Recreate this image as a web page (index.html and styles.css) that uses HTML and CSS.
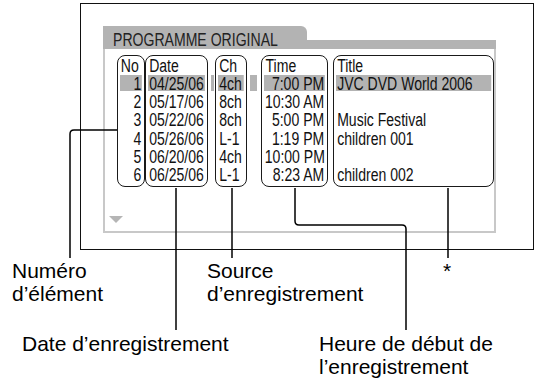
FILE: index.html
```html
<!DOCTYPE html>
<html lang="fr">
<head>
    <meta charset="UTF-8">
    <meta name="viewport" content="width=device-width, initial-scale=1.0">
    <title>Programme original</title>
    <link rel="stylesheet" href="styles.css">
</head>
<body>
    <div class="figure">
        <div class="frame">
            <div class="screen">
                <div class="screen-head">
                    <div class="tab"><span class="tab-text">PROGRAMME ORIGINAL</span></div>
                </div>
                <div class="screen-body">
                    <div class="columns">
                        <div class="col col-no">
                            <div class="cell head">No</div>
                            <div class="cell sel">1</div>
                            <div class="cell">2</div>
                            <div class="cell">3</div>
                            <div class="cell">4</div>
                            <div class="cell">5</div>
                            <div class="cell">6</div>
                        </div>
                        <div class="col col-date">
                            <div class="cell head">Date</div>
                            <div class="cell sel">04/25/06</div>
                            <div class="cell">05/17/06</div>
                            <div class="cell">05/22/06</div>
                            <div class="cell">05/26/06</div>
                            <div class="cell">06/20/06</div>
                            <div class="cell">06/25/06</div>
                        </div>
                        <div class="spacer spacer-a"><div class="strip"></div></div>
                        <div class="col col-ch">
                            <div class="cell head">Ch</div>
                            <div class="cell sel">4ch</div>
                            <div class="cell">8ch</div>
                            <div class="cell">8ch</div>
                            <div class="cell">L-1</div>
                            <div class="cell">4ch</div>
                            <div class="cell">L-1</div>
                        </div>
                        <div class="spacer spacer-b"><div class="strip"></div></div>
                        <div class="col col-time">
                            <div class="cell head">Time</div>
                            <div class="cell sel">7:00 PM</div>
                            <div class="cell">10:30 AM</div>
                            <div class="cell">5:00 PM</div>
                            <div class="cell">1:19 PM</div>
                            <div class="cell">10:00 PM</div>
                            <div class="cell">8:23 AM</div>
                        </div>
                        <div class="spacer spacer-c"></div>
                        <div class="col col-title">
                            <div class="cell head">Title</div>
                            <div class="cell sel">JVC DVD World 2006</div>
                            <div class="cell">&nbsp;</div>
                            <div class="cell">Music Festival</div>
                            <div class="cell">children 001</div>
                            <div class="cell">&nbsp;</div>
                            <div class="cell">children 002</div>
                        </div>
                    </div>
                    <div class="scroll-arrow"></div>
                </div>
            </div>
        </div>

        <!-- callout lines -->
        <svg class="leaders" width="535" height="379" viewBox="0 0 535 379">
            <g fill="none" stroke="#000" stroke-width="1.5">
                <path d="M117 130 H74 Q70 130 70 134 V258"/>
                <path d="M176 188 V330"/>
                <path d="M232 188 V258"/>
                <path d="M295 188 V221 Q295 225 299 225 H402 Q406 225 406 229 V330"/>
                <path d="M448 188 V258"/>
            </g>
        </svg>

        <div class="label label-no">Numéro<br>d’élément</div>
        <div class="label label-src">Source<br>d’enregistrement</div>
        <div class="label label-star">*</div>
        <div class="label label-date">Date d’enregistrement</div>
        <div class="label label-time">Heure de début de<br>l’enregistrement</div>
    </div>
</body>
</html>
```

FILE: styles.css
```css
body {
    margin: 0;
    padding: 0;
    background: #fff;
    font-family: "Liberation Sans", Arial, sans-serif;
}

.figure {
    position: relative;
    width: 535px;
    height: 379px;
    overflow: hidden;
}

.frame {
    margin: 3px 0 0 80px;
    border: 1.5px solid #111;
    padding: 21.5px 0 0 21.5px;
    box-sizing: border-box;
    width: 454px;
    height: 247px;
}

.screen {
    width: 393px;
    height: 207px;
    display: flex;
    flex-direction: column;
    font-size: 18px;
    color: #111;
}

.screen-head {
    height: 23px;
    background: linear-gradient(to bottom, transparent 14px, #b3b3b3 14px);
}

.tab {
    width: 204px;
    height: 23px;
    background: #b3b3b3;
    border-top-right-radius: 6px;
    padding-left: 10px;
    box-sizing: border-box;
    font-size: 18.5px;
    line-height: 27px;
    color: #222;
    white-space: nowrap;
}

.tab-text {
    display: inline-block;
    transform: scaleX(0.76);
    transform-origin: left center;
}

.screen-body {
    flex: 1;
    border: 2px solid #c8c8c8;
    border-top: none;
    padding: 6px 0 0 12px;
    display: flex;
    flex-direction: column;
}

.columns {
    display: flex;
    align-items: stretch;
}

.col {
    box-sizing: border-box;
    border: 1.5px solid #1a1a1a;
    border-radius: 8px;
    padding: 1px 2px;
}

.col-no { width: 28px; }
.col-date { width: 63px; }
.col-ch { width: 32px; }
.col-time { width: 67px; }
.col-title { width: 161px; }

/* condensed look: text laid out wide, then squeezed */
.cell {
    box-sizing: border-box;
    width: 128.2%;
    height: 18.3px;
    line-height: 18.3px;
    padding: 0 1.5px;
    white-space: nowrap;
    transform: scaleX(0.78);
    transform-origin: left center;
}

.col-no .cell { text-align: right; padding: 0 1px 0 2px; }
.col-time .cell { text-align: right; padding: 0 1px; }
.col-no .head,
.col-time .head { text-align: left; }
.col-no .head { padding-left: 1px; }
.col-time .head { padding-left: 2px; }

.sel {
    background: linear-gradient(#b3b3b3, #b3b3b3) 0 0 / 100% 16px no-repeat;
}

.spacer {
    padding-top: 20.8px;
}

.spacer-a { width: 7px; }
.spacer-b { width: 14px; }
.spacer-c { width: 5px; }

.spacer-a .strip { margin: 0 1px 0 3px; }
.spacer-b .strip { margin: 0 4px 0 3px; }

.strip {
    height: 16px;
    background: #b3b3b3;
}

.scroll-arrow {
    margin: 29px 0 0 -8px;
    width: 0;
    height: 0;
    border-left: 7.5px solid transparent;
    border-right: 7.5px solid transparent;
    border-top: 7px solid #b5b5b5;
}

.leaders {
    position: absolute;
    left: 0;
    top: 0;
}

.label {
    position: absolute;
    font-size: 21px;
    line-height: 23px;
    color: #000;
    white-space: nowrap;
}

.label-no { left: 12px; top: 259px; }
.label-src { left: 207px; top: 259px; }
.label-star { left: 443px; top: 259px; }
.label-date { left: 22px; top: 332px; }
.label-time { left: 319px; top: 332px; }
```
